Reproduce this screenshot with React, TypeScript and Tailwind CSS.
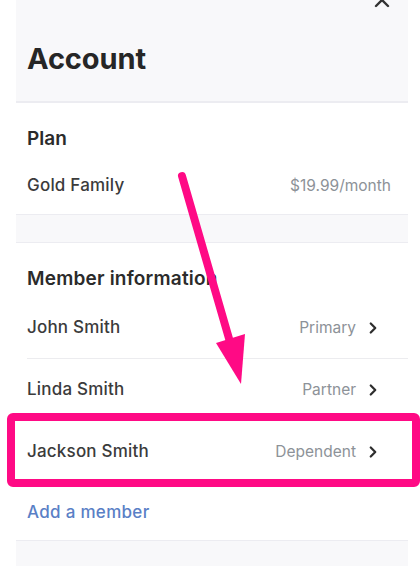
import { ChevronRight, X } from 'lucide-react'

const members = [
    { name: 'John Smith', role: 'Primary', h: 'h-[61px]' },
    { name: 'Linda Smith', role: 'Partner', h: 'h-[62px]' },
    { name: 'Jackson Smith', role: 'Dependent', h: 'h-[62px]' },
]

export default function App() {
    return (
        <div
            className="relative w-[420px] h-[566px] overflow-hidden bg-white"
            style={{ fontFamily: 'Inter, "Noto Sans", sans-serif' }}
        >
            <div className="mx-4 w-[392px] flex flex-col">
                <div className="relative h-[103px] bg-[#f8f8fa] border-b-2 border-[#ececf1]">
                    <X className="absolute -top-[12px] right-[14px] w-[24px] h-[24px] text-[#333]" strokeWidth={2.4} />
                    <p className="absolute left-[11px] top-[42px] text-[29px] leading-[34px] font-bold text-[#262626] tracking-[-0.1px]">
                        Account
                    </p>
                </div>

                <div className="flex flex-col">
                    <p className="pl-[11px] pt-[24px] pb-[6px] text-[19px] leading-[24px] font-semibold text-[#2b2b2b]">
                        Plan
                    </p>
                    <div className="h-[57px] flex items-center justify-between pl-[11px] pr-[17px]">
                        <span className="text-[17px] font-medium text-[#3b3b3b] tracking-[0.2px]">Gold Family</span>
                        <span className="text-[15.5px] text-[#8d9298]">$19.99/month</span>
                    </div>
                </div>

                <div className="h-[29px] bg-[#f8f8fa] border-y border-[#ececf1]" />

                <div className="flex flex-col">
                    <p className="pl-[11px] pt-[24px] pb-[7px] text-[19px] leading-[24px] font-semibold text-[#2b2b2b] tracking-[0.2px]">
                        Member information
                    </p>
                    {members.map(m => (
                        <div key={m.name} className={`${m.h} ml-[11px] flex items-center justify-between border-b border-[#ececef] pr-[26px]`}>
                            <span className="text-[17px] font-medium text-[#3b3b3b] tracking-[0.2px]">{m.name}</span>
                            <span className="flex items-center gap-[8px] text-[15.5px] text-[#8d9298]">
                                {m.role}
                                <ChevronRight className="w-[18px] h-[18px] text-[#2e2e2e]" strokeWidth={3} />
                            </span>
                        </div>
                    ))}
                    <div className="h-[57px] pt-[3px] flex items-center pl-[11px]">
                        <span className="text-[17px] font-medium text-[#5a7fc6] tracking-[0.3px]">Add a member</span>
                    </div>
                </div>

                <div className="h-[40px] bg-[#f8f8fa] border-t border-[#ececf1]" />
            </div>

            {/* annotation: highlight box */}
            <div className="absolute left-[7px] top-[413px] w-[413px] h-[74px] border-[8px] border-[#ff0a85] rounded-[6px]" />

            {/* annotation: arrow */}
            <svg className="absolute left-0 top-0" width="420" height="566" viewBox="0 0 420 566">
                <line x1="182" y1="176" x2="230" y2="342" stroke="#ff0a85" strokeWidth="8" strokeLinecap="round" />
                <polygon points="216,343 245,334 241,384" fill="#ff0a85" />
            </svg>
        </div>
    )
}
